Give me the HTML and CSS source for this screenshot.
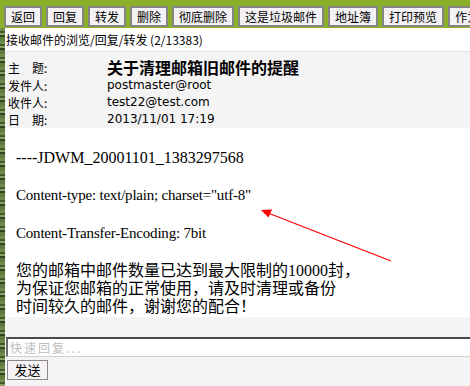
FILE: index.html
```html
<!DOCTYPE html>
<html lang="zh-CN">
<head>
<meta charset="utf-8">
<title>接收邮件的浏览</title>
<link rel="stylesheet" href="styles.css">
</head>
<body>
<div class="page">
  <div class="toolbar">
    <button class="btn">返回</button>
    <button class="btn">回复</button>
    <button class="btn">转发</button>
    <button class="btn">删除</button>
    <button class="btn">彻底删除</button>
    <button class="btn">这是垃圾邮件</button>
    <button class="btn">地址簿</button>
    <button class="btn">打印预览</button>
    <button class="btn">作为附件转发</button>
  </div>
  <div class="main">
    <div class="strip"></div>
    <div class="content">
      <div class="crumb">接收邮件的浏览/回复/转发 (2/13383)</div>
      <div class="headers">
        <div class="label">主　题:</div><div class="subject">关于清理邮箱旧邮件的提醒</div>
        <div class="label">发件人:</div><div class="value">postmaster@root</div>
        <div class="label">收件人:</div><div class="value">test22@test.com</div>
        <div class="label">日　期:</div><div class="value">2013/11/01 17:19</div>
      </div>
      <div class="mailbody">
        <div class="line">----JDWM_20001101_1383297568</div>
        <div class="line">&nbsp;</div>
        <div class="line narrow">Content-type: text/plain; charset="utf-8"</div>
        <div class="line">&nbsp;</div>
        <div class="line narrow">Content-Transfer-Encoding: 7bit</div>
        <div class="line">&nbsp;</div>
        <div class="cn">您的邮箱中邮件数量已达到最大限制的10000封，<br>为保证您邮箱的正常使用，请及时清理或备份<br>时间较久的邮件，谢谢您的配合！</div>
      </div>
      <div class="reply">
        <input class="quick" type="text" placeholder="快速回复...">
        <button class="send">发送</button>
      </div>
    </div>
  </div>
  <svg class="arrow" width="470" height="386" viewBox="0 0 470 386">
    <line x1="391" y1="261" x2="268" y2="213" stroke="#ff0000" stroke-width="1.2"/>
    <polygon points="261,210 272,209.5 268.5,217.5" fill="#ff0000"/>
  </svg>
</div>
</body>
</html>
```
FILE: styles.css
```css
* { box-sizing: border-box; }
html, body { margin: 0; padding: 0; }
body {
  width: 470px;
  height: 386px;
  overflow: hidden;
  background: #f4f4f4;
  font-family: "Noto Sans CJK SC", sans-serif;
  font-size: 12px;
  color: #000;
}
.page {
  position: relative;
  width: 470px;
  height: 386px;
  display: flex;
  flex-direction: column;
}
.toolbar {
  height: 28px;
  background: #8bb02a;
  display: flex;
  gap: 4px;
  padding: 6px 0 1px 4px;
  overflow: hidden;
  white-space: nowrap;
  flex: none;
}
.btn {
  flex: none;
  height: 21px;
  margin: 0;
  padding: 0 5px;
  border: 2px solid #858585;
  background: #f4f2f4;
  font-family: "Noto Sans CJK SC", sans-serif;
  font-size: 12px;
  line-height: 17px;
  color: #000;
}
.main {
  flex: 1;
  display: flex;
  min-height: 0;
}
.strip {
  width: 5px;
  flex: none;
  background:
    repeating-linear-gradient(180deg, #6f8a4c 0 3px, #3f5a2c 3px 5px, #8aa066 5px 7px, #2d4421 7px 9px, #5e7b3d 9px 13px);
}
.content {
  flex: 1;
  min-width: 0;
  display: flex;
  flex-direction: column;
  background: #f4f4f4;
}
.crumb {
  height: 24px;
  background: #fff;
  border-bottom: 1px solid #e2e2e2;
  padding: 4px 0 0 1px;
  line-height: 16px;
  font-size: 12px;
  white-space: nowrap;
}
.headers {
  display: grid;
  grid-template-columns: 99px 1fr;
  grid-template-rows: 20px 17px 17px 17px;
  padding: 5px 0 0 3px;
  height: 76px;
  background: #f4f4f4;
  align-items: center;
}
.label {
  font-size: 12px;
  line-height: 17px;
}
.subject {
  font-size: 16px;
  font-weight: bold;
  line-height: 20px;
}
.value {
  font-family: "DejaVu Sans", "Noto Sans CJK SC", sans-serif;
  font-size: 12px;
  line-height: 17px;
}
.mailbody {
  margin-left: 1px;
  background: #fff;
  padding: 20px 0 0 10px;
  height: 189px;
  font-family: "Liberation Serif", "Noto Sans CJK SC", serif;
  font-size: 16px;
  white-space: nowrap;
}
.line { line-height: 19px; }
.narrow { font-size: 15px; letter-spacing: -0.2px; }
.cn { line-height: 18px; }
.reply {
  padding: 20px 0 0 1px;
  display: flex;
  flex-direction: column;
  align-items: flex-start;
  gap: 3px;
}
.quick {
  width: 100%;
  height: 20px;
  margin: 0;
  padding: 0 2px;
  border-style: solid;
  border-width: 2px 0 1px 2px;
  border-color: #4a4a4a #d4d0c8 #d4d0c8 #6a6a6a;
  background: #fff;
  font-family: "Noto Sans CJK SC", sans-serif;
  font-size: 12px;
  letter-spacing: 2px;
  outline: none;
}
.quick::placeholder { color: #bdbdbd; }
.send {
  margin: 0 0 0 1px;
  width: 41px;
  height: 20px;
  padding: 0;
  border: 1px solid #8a8a8a;
  background: #f6f2f6;
  font-family: "Noto Sans CJK SC", sans-serif;
  font-size: 13px;
  line-height: 16px;
  color: #000;
}
.arrow {
  position: absolute;
  left: 0;
  top: 0;
  pointer-events: none;
}
```
